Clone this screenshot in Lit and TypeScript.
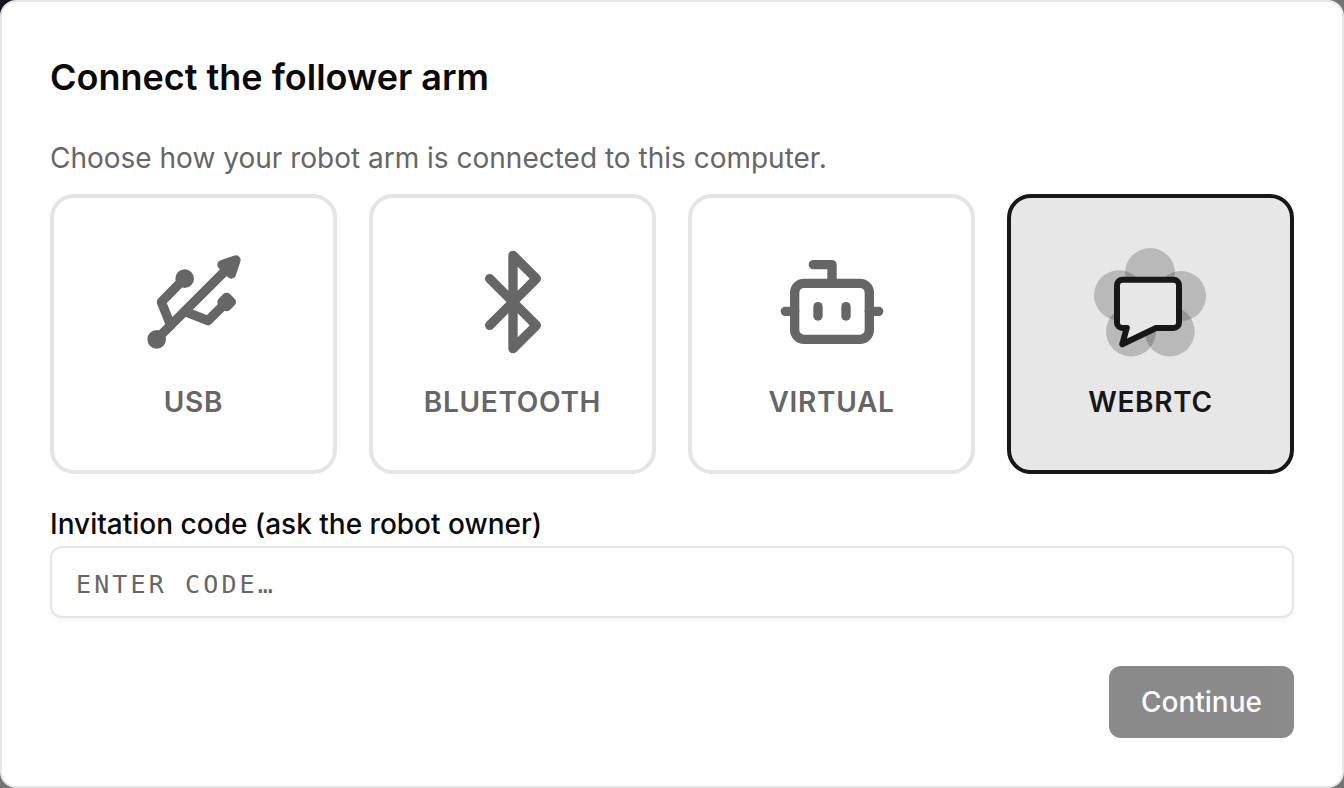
import { LitElement, html, svg, css } from "lit";
import { customElement, state } from "lit/decorators.js";

const transports = [
  {
    id: "usb",
    label: "USB",
    viewBox: "0 0 24 24",
    art: svg`<circle cx="10" cy="7" r="1"/><circle cx="4" cy="20" r="1"/>
      <path d="M4.7 19.3 19 5"/><path d="m21 3-3 1 2 2Z"/>
      <path d="M9.26 7.68 5 12l2 5"/><path d="m10 14 5 2 3.5-3.5"/>
      <path d="m18 12 1-1 1 1-1 1Z"/>`,
  },
  {
    id: "bluetooth",
    label: "BLUETOOTH",
    viewBox: "0 0 24 24",
    art: svg`<path d="m7 7 10 10-5 5V2l5 5L7 17"/>`,
  },
  {
    id: "virtual",
    label: "VIRTUAL",
    viewBox: "0 0 24 24",
    art: svg`<path d="M12 8V4H8"/><rect width="16" height="12" x="4" y="8" rx="2"/>
      <path d="M2 14h2"/><path d="M20 14h2"/><path d="M15 13v2"/><path d="M9 13v2"/>`,
  },
  {
    id: "webrtc",
    label: "WEBRTC",
    viewBox: "0 0 112 112",
    art: svg`<g class="petals">
        <circle cx="55" cy="27" r="25"/><circle cx="24" cy="49.3" r="25"/>
        <circle cx="86" cy="50" r="25"/><circle cx="36" cy="85.5" r="25"/>
        <circle cx="74.7" cy="85.5" r="25"/>
      </g>
      <path class="bubble" d="M27.5 33.7H78.5a5.5 5.5 0 0 1 5.5 5.5V76.5a5.5 5.5 0 0 1-5.5 5.5H61L27.2 98.3 31.8 82H27.5a5.5 5.5 0 0 1-5.5-5.5V39.2a5.5 5.5 0 0 1 5.5-5.5Z"/>`,
  },
];

@customElement("app-root")
export class AppRoot extends LitElement {
  @state() private selected = "webrtc";
  @state() private code = "";

  static styles = css`
    :host {
      display: flex;
      min-height: 100vh;
      background: radial-gradient(circle at 0 0, #14151d 20px, #747474 24px);
      font-family: Inter, sans-serif;
      font-size: 28px;
      line-height: 40px;
      color: #0a0a0a;
    }
    * { box-sizing: border-box; }
    .dialog {
      flex: 1;
      padding: 48px;
      border: 2px solid #e5e5e5;
      border-radius: 16px;
      background: #fff;
    }
    .title {
      margin: 0 0 34px;
      font-size: 36px;
      line-height: 54px;
      font-weight: 600;
    }
    .hint { margin: 0 0 16px; color: #666; }
    .tiles {
      display: grid;
      grid-template-columns: repeat(4, 1fr);
      gap: 32px;
      margin-bottom: 32px;
    }
    button, input { font: inherit; }
    .tile {
      display: flex;
      flex-direction: column;
      align-items: center;
      gap: 24px;
      padding: 48px 0;
      border: 4px solid #e5e5e5;
      border-radius: 24px;
      background: #fff;
      color: #666;
      font-weight: 600;
      letter-spacing: 0.025em;
    }
    .tile[aria-pressed="true"] {
      border-color: #171717;
      background: #e7e7e7;
      color: #171717;
    }
    .icon {
      width: 112px;
      height: 112px;
      overflow: visible;
      fill: none;
      stroke: currentColor;
      stroke-width: 2;
      stroke-linecap: round;
      stroke-linejoin: round;
    }
    .petals { fill: currentColor; fill-opacity: 0.22; stroke: none; }
    .bubble { fill: #e7e7e7; stroke-width: 6; }
    .field { display: grid; gap: 4px; margin-bottom: 48px; }
    .label { line-height: 36px; font-weight: 500; }
    .code {
      width: 100%;
      height: 72px;
      padding: 4px 24px 0;
      border: 2px solid #e5e5e5;
      border-radius: 12px;
      background: transparent;
      box-shadow: 0 2px 4px rgb(0 0 0 / 0.05);
      font-family: "DejaVu Sans Mono", monospace;
      font-size: 25px;
      letter-spacing: 0.125em;
      text-transform: uppercase;
      color: #0a0a0a;
    }
    .code::placeholder { color: #666; opacity: 1; }
    .footer { display: flex; justify-content: flex-end; }
    .submit {
      padding: 16px 32px;
      border: 0;
      border-radius: 12px;
      background: #171717;
      color: #fafafa;
      font-weight: 500;
    }
    .submit:disabled { opacity: 0.5; }
  `;

  render() {
    return html`
      <main class="dialog">
        <h1 class="title">Connect the follower arm</h1>
        <p class="hint">Choose how your robot arm is connected to this computer.</p>
        <div class="tiles">
          ${transports.map(
            (t) => html`<button
              class="tile"
              type="button"
              aria-pressed=${this.selected === t.id ? "true" : "false"}
              @click=${() => (this.selected = t.id)}
            >
              <svg class="icon" viewBox=${t.viewBox} aria-hidden="true">${t.art}</svg>
              <span>${t.label}</span>
            </button>`
          )}
        </div>
        <div class="field">
          <label class="label" for="code">Invitation code (ask the robot owner)</label>
          <input
            class="code"
            id="code"
            type="text"
            placeholder="Enter code…"
            .value=${this.code}
            @input=${(e: Event) => (this.code = (e.target as HTMLInputElement).value)}
          />
        </div>
        <div class="footer">
          <button class="submit" type="button" ?disabled=${!this.code}>Continue</button>
        </div>
      </main>
    `;
  }
}
